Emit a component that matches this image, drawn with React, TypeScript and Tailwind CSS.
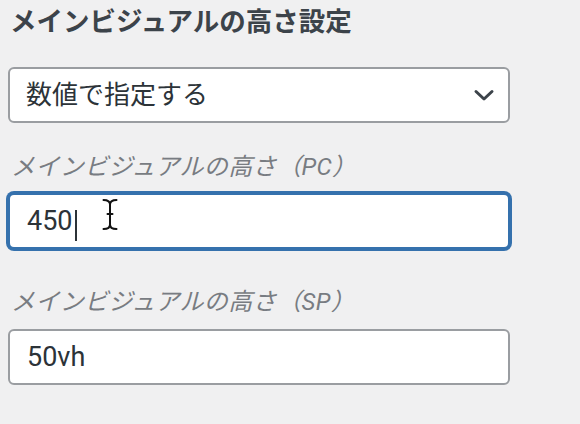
import React from 'react';

const font = 'font-["Roboto","Noto_Sans_CJK_JP",sans-serif]';

function Chevron() {
	return (
		<svg width="22" height="13" viewBox="0 0 22 13" fill="none">
			<path
				d="M3 2.5 L11 10 L19 2.5"
				stroke="#3c434a"
				strokeWidth="3"
				strokeLinecap="round"
				strokeLinejoin="round"
			/>
		</svg>
	);
}

function IBeam() {
	return (
		<svg width="18" height="33" viewBox="0 0 18 33" fill="none">
			<path
				d="M2.5 2 Q9 2 9 6.5 Q9 2 15.5 2 M9 6.5 L9 26.5 M6.5 16 L11.5 16 M2.5 31 Q9 31 9 26.5 Q9 31 15.5 31"
				stroke="#111"
				strokeWidth="2"
				strokeLinecap="round"
			/>
		</svg>
	);
}

export default function App() {
	return (
		<div className={`min-h-[424px] w-[580px] bg-[#f0f0f1] pt-[6px] pl-[8px] ${font}`}>
			<h2 className="pl-[2px] text-[26.5px] font-bold leading-[32px] text-[#3c434a]">
				メインビジュアルの高さ設定
			</h2>

			<div className="mt-[29px] flex h-[56px] w-[502px] items-center justify-between rounded-[6px] border-2 border-[#9a9da1] bg-white pr-[13px] pl-[16px]">
				<span className="text-[26px] leading-none text-[#2c3338]">数値で指定する</span>
				<Chevron />
			</div>

			<label className="mt-[29px] block pl-[3px] text-[24px] italic leading-[30px] tracking-[0.4px] text-[#787c82]">
				メインビジュアルの高さ（PC）
			</label>
			<div className="relative mt-[11px] flex h-[56px] w-[502px] items-center rounded-[6px] border-2 border-[#3571ad] bg-white pl-[17px] shadow-[0_0_0_2px_#3571ad]">
				<span className="text-[27px] leading-none text-[#2c3338]">450</span>
				<span className="ml-[2px] h-[31px] w-[2px] translate-y-[4px] bg-[#2c3338]" />
				<div className="absolute top-[3px] left-[91px]">
					<IBeam />
				</div>
			</div>

			<label className="mt-[38px] block pl-[3px] text-[24px] italic leading-[30px] tracking-[0.4px] text-[#787c82]">
				メインビジュアルの高さ（SP）
			</label>
			<div className="mt-[12px] flex h-[56px] w-[502px] items-center rounded-[6px] border-2 border-[#9a9da1] bg-white pl-[17px]">
				<span className="text-[27px] leading-none text-[#2c3338]">50vh</span>
			</div>
		</div>
	);
}
